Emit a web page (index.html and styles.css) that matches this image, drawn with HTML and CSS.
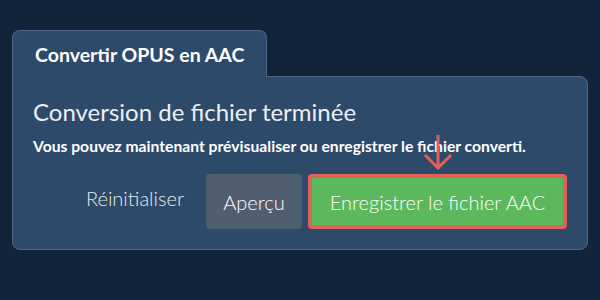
FILE: index.html
```html
<!DOCTYPE html>
<html>

<head>
    <title>Convertir OPUS en AAC</title>
    <meta name="viewport" content="width=device-width, minimum-scale=1.0" />
    <link rel="stylesheet" href="styles.css">
</head>

<body>
    <div class="panel">
        <div class="tab">Convertir OPUS en AAC</div>
        <div class="card">
            <h2>Conversion de fichier terminée</h2>
            <p class="sub">Vous pouvez maintenant prévisualiser ou enregistrer le fichier converti.</p>
            <div class="actions">
                <button class="btn btn-link">Réinitialiser</button>
                <button class="btn btn-grey">Aperçu</button>
                <div class="save-wrap">
                    <!-- pointer arrow over the save button -->
                    <svg class="arrow" width="30" height="35" viewBox="0 0 30 35">
                        <path d="M15 0 L15 33 M2 20 L15 33 L28 20" fill="none" stroke="#e0605a" stroke-width="3" />
                    </svg>
                    <button class="btn btn-save">Enregistrer le fichier AAC</button>
                </div>
            </div>
        </div>
    </div>
</body>

</html>
```

FILE: styles.css
```css
html,
body {
    margin: 0;
    height: 100%;
}

body {
    background: #12233a;
    font-family: Lato, "Liberation Sans", sans-serif;
    color: #fff;
    padding: 30px 12px 0;
    box-sizing: border-box;
}

.panel {
    display: flex;
    flex-direction: column;
    align-items: flex-start;
}

.tab {
    position: relative;
    z-index: 1;
    background: #2e4a6b;
    border: 1px solid #4d6689;
    border-bottom: 0;
    border-radius: 8px 8px 0 0;
    margin-bottom: -1px;
    padding: 12px 22px 10px 22px;
    font-weight: bold;
    font-size: 19.5px;
    line-height: 24px;
    white-space: nowrap;
}

.card {
    align-self: stretch;
    background: #2e4a6b;
    border: 1px solid #4d6689;
    border-radius: 0 8px 8px 8px;
    padding: 21px 20px 20px 20px;
    height: 174px;
    box-sizing: border-box;
}

h2 {
    margin: 0;
    font-weight: normal;
    font-size: 24px;
    line-height: 28px;
    color: #eceef2;
}

.sub {
    margin: 10px 0 0;
    font-weight: bold;
    font-size: 15.7px;
    line-height: 20px;
    white-space: nowrap;
}

.actions {
    display: flex;
    justify-content: flex-end;
    align-items: flex-end;
    gap: 6px;
    margin-top: 18px;
}

.btn {
    font-family: inherit;
    font-size: 20px;
    font-weight: 300;
    color: #fff;
    border: 0;
    border-radius: 4px;
    height: 55px;
    padding: 0;
    white-space: nowrap;
}

.btn-link {
    background: none;
    color: #e6e9ee;
    padding: 0 16px 8px 22px;
}

.btn-grey {
    background: #4f5f70;
    width: 96px;
}

.save-wrap {
    position: relative;
}

.arrow {
    position: absolute;
    left: 50%;
    bottom: 100%;
    margin-left: -15px;
    margin-bottom: 4px;
}

.btn-save {
    display: block;
    background: #5cb85c;
    border: 4px solid #e0605a;
    width: 259px;
}
```
